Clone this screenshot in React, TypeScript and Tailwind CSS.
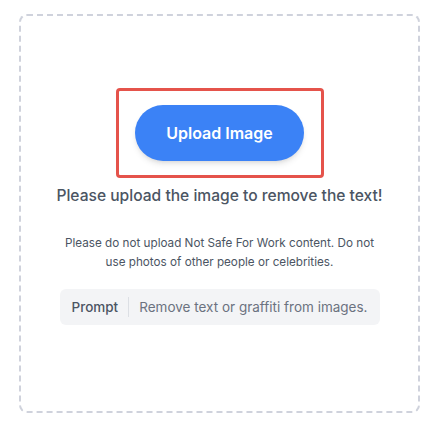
export default function App() {
  return (
    <div className="min-h-screen bg-white px-[19px] pt-[14px] font-['Inter',sans-serif]">
      <div className="flex h-[399px] w-full flex-col items-center rounded-lg border-2 border-dashed border-[#cfd2dc] pt-[72px]">
        <div className="flex h-[90px] w-[208px] items-center justify-center rounded-sm border-[3px] border-[#e5534b]">
          <button className="h-[56px] w-[169px] rounded-full bg-[#3b82f6] text-base font-semibold text-white shadow-md">
            Upload Image
          </button>
        </div>

        <h2 className="mt-2 whitespace-nowrap text-[15.6px] font-medium leading-5 text-[#4b5563]">
          Please upload the image to remove the text!
        </h2>

        <p className="mt-[28px] max-w-[320px] text-center text-[11.7px] leading-[19px] text-[#4b5563]">
          Please do not upload Not Safe For Work content. Do not use photos of other people or celebrities.
        </p>

        <div className="mt-[17px] flex h-9 w-[320px] items-center whitespace-nowrap rounded-md bg-[#f3f4f6] px-3 text-[13.5px]">
          <span className="font-medium text-[#4b5563]">Prompt</span>
          <span className="mx-2.5 h-5 w-px bg-[#dcdfe4]" />
          <span className="text-[#6b7280]">Remove text or graffiti from images.</span>
        </div>
      </div>
    </div>
  );
}
